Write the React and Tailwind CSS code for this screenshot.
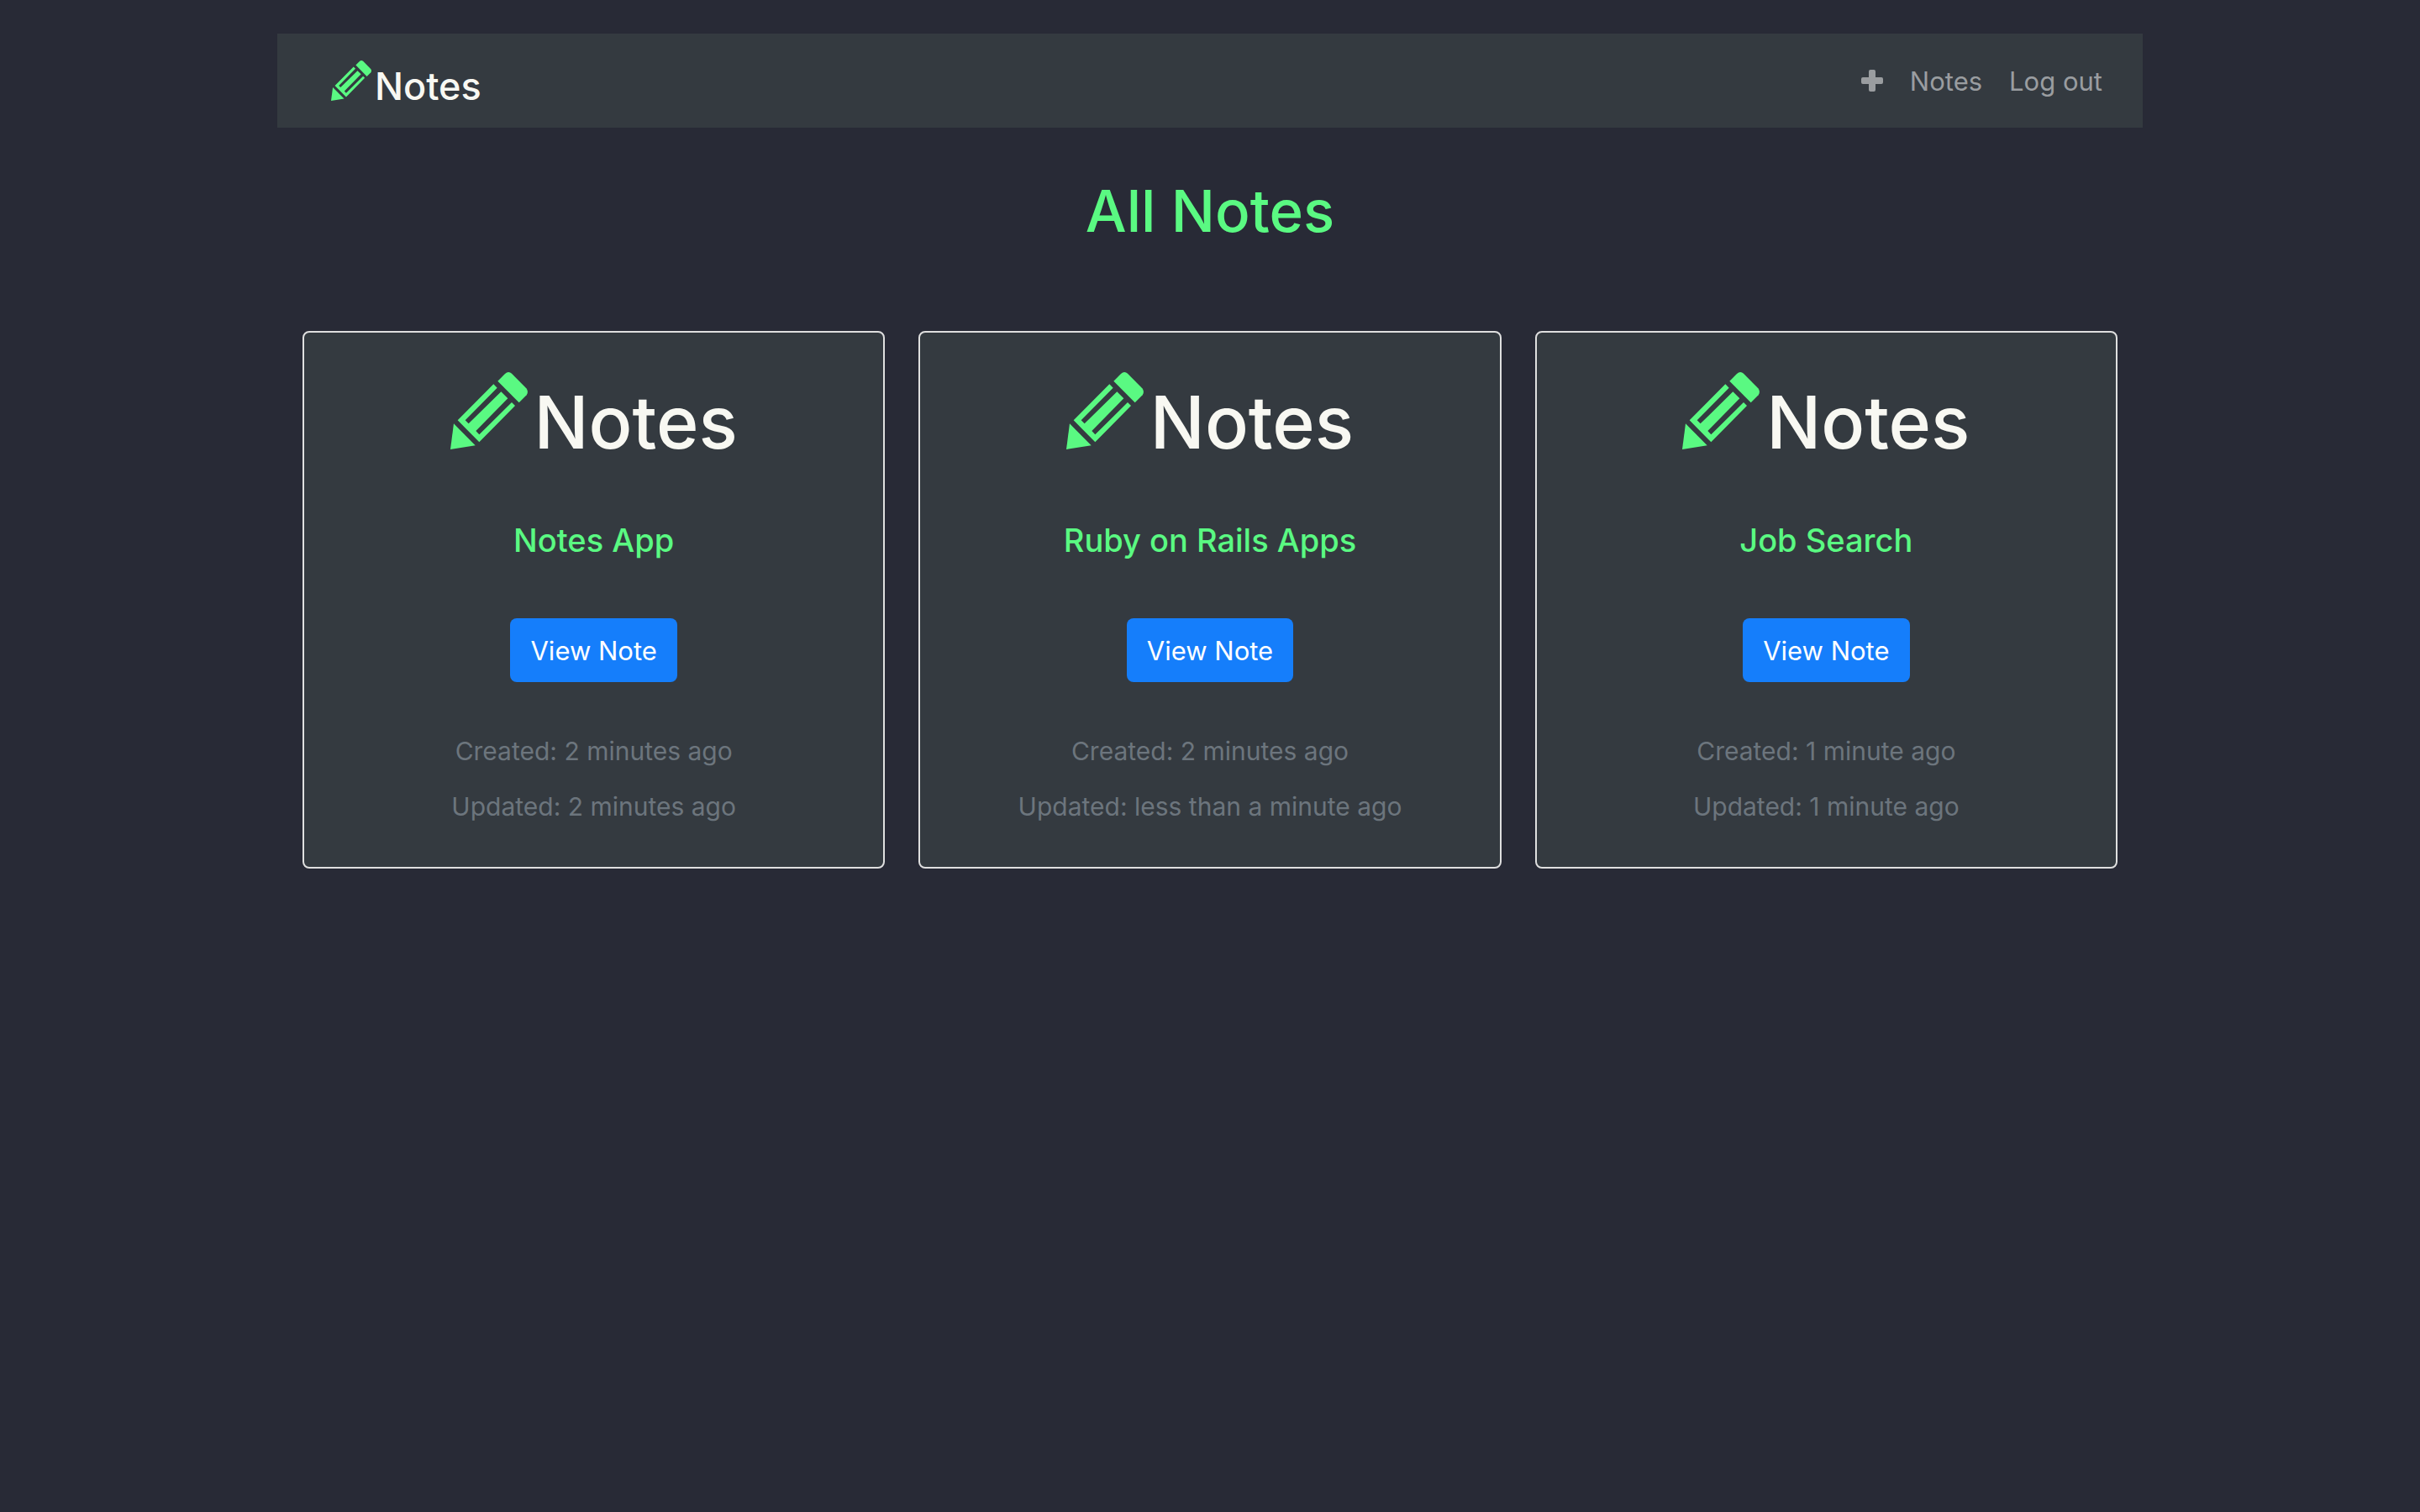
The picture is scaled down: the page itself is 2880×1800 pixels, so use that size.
const notes = [
  { title: "Notes App", created: "2 minutes ago", updated: "2 minutes ago" },
  { title: "Ruby on Rails Apps", created: "2 minutes ago", updated: "less than a minute ago" },
  { title: "Job Search", created: "1 minute ago", updated: "1 minute ago" },
];

function Pencil({ className }) {
  return (
    <svg viewBox="42 38 276 276" fill="currentColor" aria-hidden="true" className={className}>
      <path d="M211 70L237 44Q249 33 261 43L313 96Q322 107 314 120L287 147Z" />
      <path
        fillRule="evenodd"
        d="M196 81L209 94L95 210L107 222L223 108L247 132L133 248L145 261L261 146L273 158L145 288L68 210Z"
      />
      <path d="M54 222L131 300L42 314Z" />
    </svg>
  );
}

function Header() {
  return (
    <header className="flex h-28 items-center justify-between bg-[#343a40] pr-12 pl-16">
      <a href="#" className="flex items-end text-[#f8f8f2]">
        <Pencil className="size-12 text-[#5af982]" />
        <span className="pl-1 text-[45px] leading-[34px] font-medium">Notes</span>
      </a>
      <nav className="flex items-center gap-8 text-[31px] leading-12 text-[#9a9da0]">
        <a href="#" aria-label="New note">
          <svg viewBox="0 0 26 26" fill="currentColor" className="size-[26px]">
            <path d="M11 0h4q2 0 2 2v7h7q2 0 2 2v4q0 2-2 2h-7v7q0 2-2 2h-4q-2 0-2-2v-7H2q-2 0-2-2v-4q0-2 2-2h7V2q0-2 2-2z" />
          </svg>
        </a>
        <a href="#" className="pt-0.5">Notes</a>
        <a href="#" className="pt-0.5">Log out</a>
      </nav>
    </header>
  );
}

function NoteCard({ note }) {
  return (
    <article className="flex flex-col items-center rounded-lg border-2 border-[#dfdfdf] bg-[#343a40] px-10 pt-[47px] pb-12">
      <div className="flex items-end text-[#f8f8f2]">
        <Pencil className="size-[92px] text-[#5af982]" />
        <span className="pl-2 text-[86px] leading-16 font-medium">Notes</span>
      </div>
      <h2 className="mt-[84px] text-[38px] leading-12 font-medium text-[#5af982]">{note.title}</h2>
      <button
        type="button"
        className="mt-[69px] h-[76px] rounded-lg bg-[#157efb] px-6 pt-0.5 text-[31px] leading-12 text-white"
      >
        View Note
      </button>
      <p className="mt-[58px] text-[30px] leading-12 text-[#6c757d]">Created: {note.created}</p>
      <p className="mt-[18px] text-[30px] leading-12 text-[#6c757d]">Updated: {note.updated}</p>
    </article>
  );
}

export default function App() {
  return (
    <div className="min-h-screen bg-[#282a36] pt-10 font-['Inter',sans-serif]">
      <div className="mx-auto max-w-[2220px]">
        <Header />
        <main className="px-[30px]">
          <h1 className="mt-14 text-center text-[69px] leading-[86px] font-medium text-[#5af982]">
            All Notes
          </h1>
          <div className="mt-[100px] grid grid-cols-3 gap-10">
            {notes.map((note) => (
              <NoteCard key={note.title} note={note} />
            ))}
          </div>
        </main>
      </div>
    </div>
  );
}
